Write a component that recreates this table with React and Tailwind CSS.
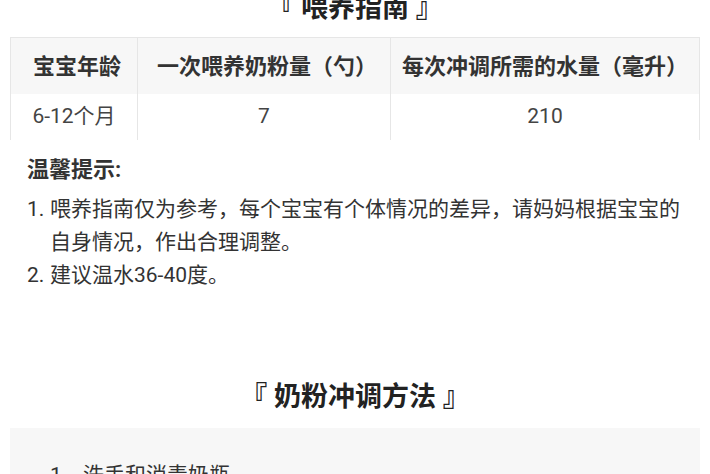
import React from 'react';

const rows = [
  { age: '6-12个月', spoons: '7', water: '210' },
];

const tips = [
  '喂养指南仅为参考，每个宝宝有个体情况的差异，请妈妈根据宝宝的自身情况，作出合理调整。',
  '建议温水36-40度。',
];

function SectionTitle({ children, className = '' }) {
  return (
    <h2 className={`text-center text-[27px] leading-[34px] font-bold text-[#222] ${className}`}>
      『 {children} 』
    </h2>
  );
}

export default function App() {
  return (
    <div className="w-[710px] h-[474px] overflow-hidden bg-white text-[#333] font-['Roboto','Noto_Sans_CJK_SC',sans-serif]">
      <SectionTitle className="-mt-[9px]">喂养指南</SectionTitle>

      {/* 喂养表 */}
      <div className="mx-[10px] mt-[12px] border-x border-t border-[#e6e6e6]">
        <div className="grid grid-cols-[127px_253px_1fr] h-[56px] bg-[#f7f7f7] text-[22px] font-bold">
          <div className="flex items-center justify-center border-r border-[#e6e6e6] pl-[6px]">宝宝年龄</div>
          <div className="flex items-center justify-center border-r border-[#e6e6e6] pl-[6px]">一次喂养奶粉量（勺）</div>
          <div className="flex items-center justify-center">每次冲调所需的水量（毫升）</div>
        </div>
        {rows.map((r) => (
          <div key={r.age} className="grid grid-cols-[127px_253px_1fr] h-[46px] text-[21px] text-[#444]">
            <div className="flex items-center justify-center border-r border-[#e6e6e6]">{r.age}</div>
            <div className="flex items-center justify-center border-r border-[#e6e6e6]">{r.spoons}</div>
            <div className="flex items-center justify-center">{r.water}</div>
          </div>
        ))}
      </div>

      {/* 温馨提示 */}
      <div className="pl-[27px] pr-[15px] mt-[13px]">
        <div className="text-[22px] leading-[34px] font-bold">温馨提示:</div>
        <div className="mt-[6px] text-[21px] leading-[33px]">
          {tips.map((t, i) => (
            <div key={i} className="flex">
              <span className="w-[23px] shrink-0">{i + 1}.</span>
              <span>{t}</span>
            </div>
          ))}
        </div>
      </div>

      <SectionTitle className="mt-[88px]">奶粉冲调方法</SectionTitle>

      <div className="mx-[10px] mt-[14px] bg-[#f7f7f7] pt-[30px] pb-[20px] pl-[40px] pr-[20px] text-[21px] leading-[34px]">
        <div className="flex">
          <span className="w-[33px] shrink-0">1.</span>
          <span>洗手和消毒奶瓶</span>
        </div>
      </div>
    </div>
  );
}
